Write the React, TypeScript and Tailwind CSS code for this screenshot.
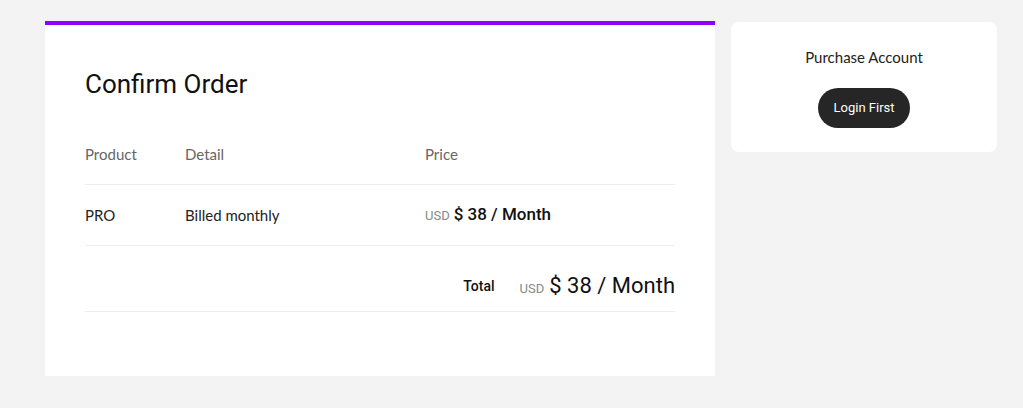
import React from "react";

export default function App() {
  return (
    <div className="min-h-[408px] w-full bg-[#f3f3f3] pl-[45px] pt-[21px] [font-family:Lato,'Noto_Sans',sans-serif]">
      <div className="flex items-start gap-4">
        <div className="w-[670px] h-[355px] bg-white border-t-4 border-[#9000ff] px-10 pt-[43px]">
          <h1 className="text-[26px] leading-8 text-[#111] [font-family:Roboto,sans-serif]">Confirm Order</h1>
          <div className="mt-[25px]">
            <div className="flex h-[60px] items-center border-b border-[#eeeeee] text-[15px] text-[#666]">
              <div className="w-[100px]">Product</div>
              <div className="w-[240px]">Detail</div>
              <div>Price</div>
            </div>
            <div className="flex h-[61px] items-center border-b border-[#eeeeee] text-[15px] text-[#222]">
              <div className="w-[100px]">PRO</div>
              <div className="w-[240px]">Billed monthly</div>
              <div className="flex items-baseline gap-1 [font-family:Roboto,sans-serif]">
                <span className="text-[13px] text-[#888]">USD</span>
                <span className="text-[17px] font-medium text-[#111]">$ 38 / Month</span>
              </div>
            </div>
            <div className="flex h-[66px] items-center justify-end border-b border-[#eeeeee] pt-[14px]">
              <span className="text-[14px] font-medium text-[#111] mr-[25px] mt-[2px] [font-family:Roboto,sans-serif]">Total</span>
              <div className="flex items-baseline gap-[5px] [font-family:Roboto,sans-serif]">
                <span className="text-[13px] text-[#888]">USD</span>
                <span className="text-[22px] text-[#111]">$ 38 / Month</span>
              </div>
            </div>
          </div>
        </div>
        <div className="mt-[1px] w-[266px] h-[130px] bg-white rounded-lg flex flex-col items-center pt-[25px]">
          <div className="text-[15px] leading-5 text-[#222]">Purchase Account</div>
          <button className="mt-[21px] w-[92px] h-10 rounded-full bg-[#262626] text-white text-[13px] [font-family:Roboto,sans-serif]">
            Login First
          </button>
        </div>
      </div>
    </div>
  );
}
